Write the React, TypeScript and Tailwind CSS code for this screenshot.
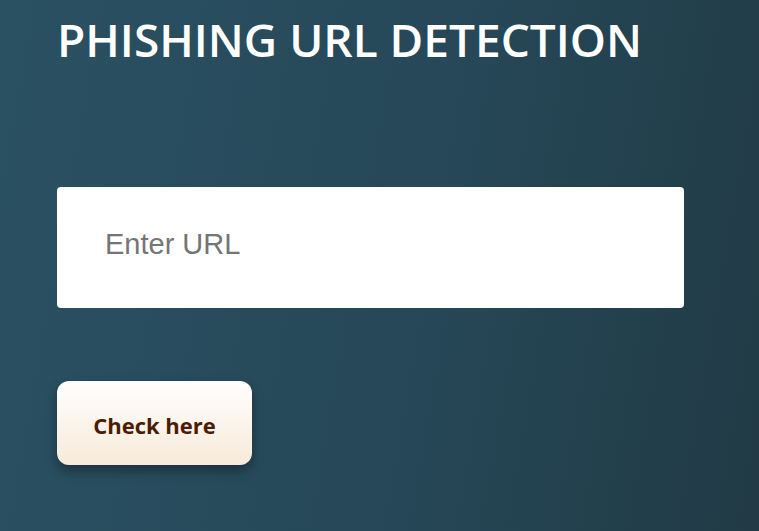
export default function App() {
  return (
    <div className="min-h-[531px] w-full bg-[linear-gradient(100deg,#2a5162_0%,#264858_55%,#213a45_100%)] pl-[57px] pt-[9px]">
      <h1 className="font-['Open_Sans',sans-serif] text-[46px] font-semibold leading-[60px] text-white">
        PHISHING URL DETECTION
      </h1>

      <form className="mt-[118px] flex flex-col items-start">
        <input
          type="text"
          placeholder="Enter URL"
          className="h-[121px] w-[627px] rounded-[4px] bg-white pb-[6px] pl-[48px] font-['Liberation_Sans',Arial,sans-serif] text-[29px] text-[#222] outline-none placeholder:text-[#757575]"
        />

        <button
          type="button"
          className="mt-[73px] h-[84px] w-[195px] rounded-[12px] bg-gradient-to-b from-white to-[#f7ead9] pt-[5px] font-['Open_Sans',sans-serif] text-[22px] font-bold text-[#4b1d02] shadow-[0_6px_12px_rgba(0,0,0,0.35)]"
        >
          Check here
        </button>
      </form>
    </div>
  );
}
